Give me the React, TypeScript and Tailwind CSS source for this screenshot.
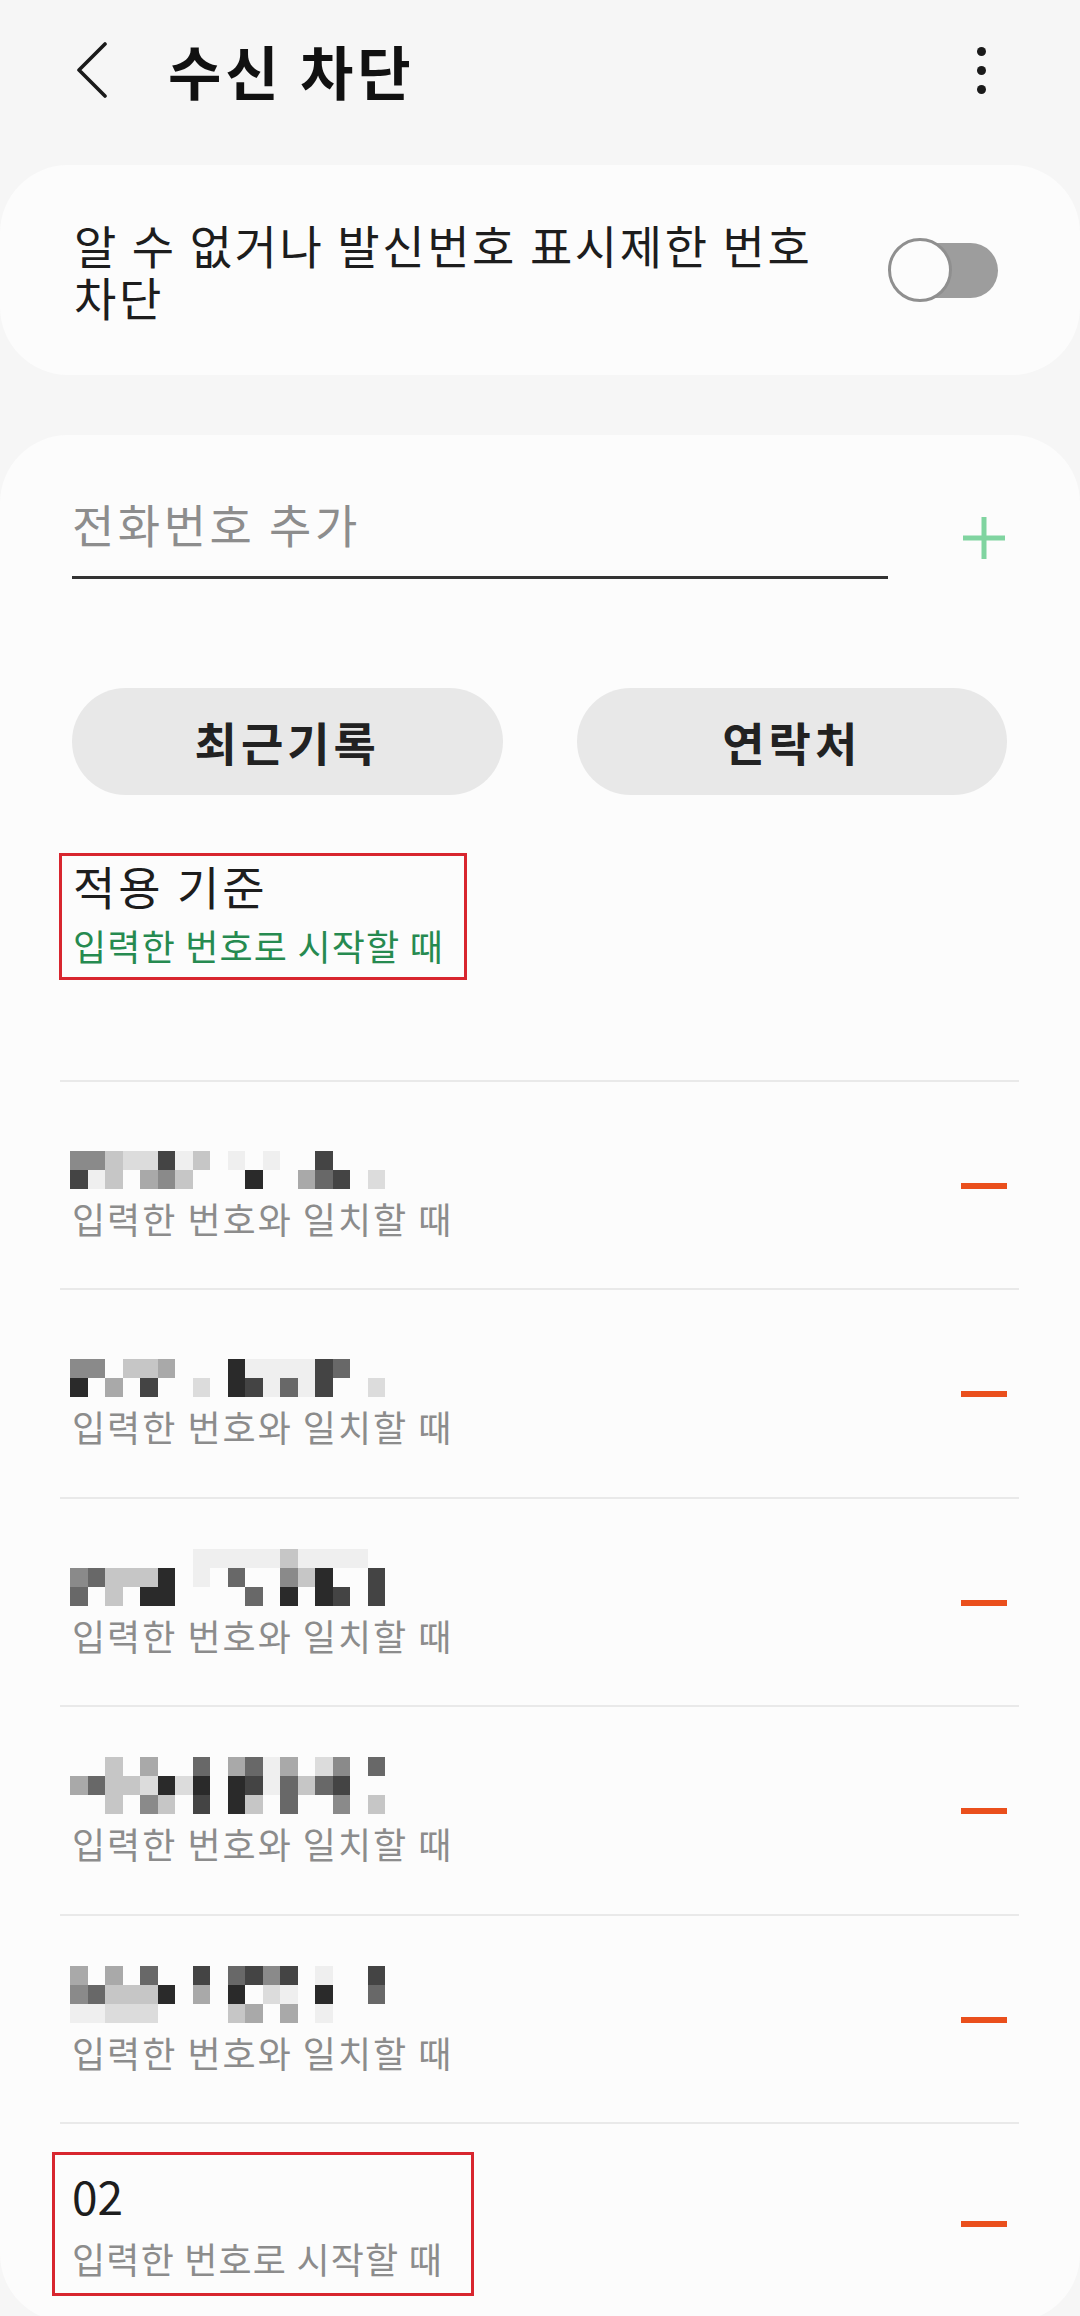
const shade = [
  '',
  'bg-[#efefef]',
  'bg-[#dcdcdc]',
  'bg-[#c6c6c6]',
  'bg-[#a9a9a9]',
  'bg-[#8a8a8a]',
  'bg-[#686868]',
  'bg-[#444444]',
  'bg-[#2a2a2a]',
];

// blurred phone numbers, as mosaic cells (0 = empty)
const blocked: number[][][] = [
  [
    [0, 0, 0, 0, 0, 0, 0, 0, 0, 0, 0, 0, 0, 0, 0, 0, 0, 0],
    [5, 5, 3, 2, 2, 7, 1, 3, 0, 1, 0, 1, 0, 0, 7, 0, 0, 0],
    [7, 1, 3, 0, 4, 5, 3, 0, 0, 0, 8, 0, 0, 4, 6, 7, 0, 2],
  ],
  [
    [0, 0, 0, 0, 0, 0, 0, 0, 0, 0, 0, 0, 0, 0, 0, 0, 0, 0],
    [5, 5, 0, 3, 3, 4, 0, 0, 0, 8, 1, 1, 1, 1, 7, 6, 0, 0],
    [8, 0, 4, 0, 7, 0, 0, 2, 0, 8, 7, 1, 6, 1, 7, 0, 0, 2],
  ],
  [
    [0, 0, 0, 0, 0, 0, 0, 1, 1, 1, 1, 1, 3, 1, 1, 1, 1, 0],
    [5, 6, 3, 3, 3, 8, 0, 1, 0, 6, 0, 0, 5, 3, 8, 0, 0, 7],
    [6, 0, 3, 0, 8, 8, 0, 0, 0, 0, 6, 0, 8, 0, 8, 7, 0, 7],
  ],
  [
    [0, 0, 3, 0, 4, 0, 0, 6, 0, 4, 6, 1, 4, 0, 2, 5, 0, 6],
    [4, 6, 3, 3, 2, 8, 2, 8, 0, 8, 7, 1, 6, 3, 6, 7, 0, 0],
    [0, 0, 3, 0, 5, 3, 0, 7, 0, 8, 3, 0, 6, 0, 0, 5, 0, 3],
  ],
  [
    [4, 0, 4, 0, 6, 0, 0, 7, 0, 6, 7, 5, 7, 0, 1, 0, 0, 7],
    [5, 6, 3, 3, 3, 8, 0, 4, 0, 8, 0, 2, 1, 0, 8, 0, 0, 6],
    [1, 1, 2, 2, 2, 0, 0, 0, 0, 3, 4, 0, 4, 0, 1, 0, 0, 0],
  ],
];

function Mosaic({ rows }: { rows: number[][] }) {
  return (
    <div className="ml-[10px] flex flex-col blur-[0.7px]">
      {rows.map((r, i) => (
        <div key={i} className="flex">
          {r.map((v, j) => (
            <div key={j} className={`h-[19px] w-[17.5px] ${shade[v]}`} />
          ))}
        </div>
      ))}
    </div>
  );
}

function Minus() {
  return <div className="mr-[12px] ml-auto h-[6px] w-[46px] bg-[#ea4f1c]" />;
}

export default function App() {
  return (
    <div className="min-h-[2316px] bg-[#f6f6f6] font-['Noto_Sans_CJK_KR','Noto_Sans',sans-serif] text-[#1d1d1d]">
      {/* header */}
      <div className="flex h-[165px] items-center pb-[25px]">
        <div className="ml-[76px] w-[34px]">
          <svg width="32" height="56" viewBox="0 0 32 56" fill="none">
            <path d="M29 2 L3 28 L29 54" stroke="#1a1a1a" strokeWidth="3.6" strokeLinecap="round" strokeLinejoin="round" />
          </svg>
        </div>
        <h1 className="ml-[58px] text-[58px] leading-none font-bold tracking-[4px] text-[#111]">수신 차단</h1>
        <div className="mr-[94px] ml-auto flex flex-col gap-[10px]">
          <span className="h-[9px] w-[9px] rounded-full bg-[#1a1a1a]" />
          <span className="h-[9px] w-[9px] rounded-full bg-[#1a1a1a]" />
          <span className="h-[9px] w-[9px] rounded-full bg-[#1a1a1a]" />
        </div>
      </div>

      {/* unknown numbers toggle */}
      <div className="flex h-[210px] items-center rounded-[68px] bg-[#fcfcfc] pr-[82px] pl-[74px]">
        <p className="flex-1 pr-[30px] text-[46px] leading-[52px] tracking-[2.6px]">알 수 없거나 발신번호 표시제한 번호 차단</p>
        <div className="relative h-[65px] w-[110px]">
          <div className="absolute top-[5px] right-0 h-[55px] w-[90px] rounded-full bg-[#9d9d9d]" />
          <div className="absolute top-0 left-0 h-[64px] w-[64px] rounded-full border-[3px] border-[#8f8f8f] bg-[#fcfcfc]" />
        </div>
      </div>

      {/* block list */}
      <div className="mt-[60px] rounded-[68px] bg-[#fcfcfc] pt-[58px]">
        <div className="flex items-start">
          <div className="ml-[72px] w-[816px] border-b-[3px] border-[#333] pb-[23px] text-[46px] leading-[60px] tracking-[3.5px] text-[#8d8d8d]">
            전화번호 추가
          </div>
          <svg className="mt-[22px] mr-[73px] ml-auto" width="46" height="46" viewBox="0 0 46 46">
            <path d="M23 2 V44 M2 23 H44" stroke="#80d4a0" strokeWidth="5" />
          </svg>
        </div>

        <div className="mt-[109px] flex gap-[74px] pr-[73px] pl-[72px]">
          <button className="flex h-[107px] w-[431px] items-center justify-center rounded-full bg-[#e8e8e8] text-[46px] font-bold tracking-[4px] text-[#222]">
            최근기록
          </button>
          <button className="flex h-[107px] w-[431px] items-center justify-center rounded-full bg-[#e8e8e8] text-[46px] font-bold tracking-[4px] text-[#222]">
            연락처
          </button>
        </div>

        <div className="mt-[58px] ml-[59px] h-[127px] w-[408px] border-[3px] border-[#d8262f] pt-[2px] pl-[11px]">
          <p className="text-[46px] leading-[54px] tracking-[3px]">적용 기준</p>
          <p className="mt-[11px] text-[36px] leading-[44px] tracking-[1.2px] text-[#268a50]">입력한 번호로 시작할 때</p>
        </div>

        <div className="mt-[100px] mr-[61px] ml-[60px]">
          {blocked.map((rows, i) => (
            <div key={i} className="flex items-center border-t-2 border-[#e9e9e9] pt-[50px] pb-[48.4px]">
              <div>
                <Mosaic rows={rows} />
                <p className="mt-[7px] pl-[12px] text-[36px] leading-[44px] tracking-[2px] text-[#8c8c8c]">입력한 번호와 일치할 때</p>
              </div>
              <Minus />
            </div>
          ))}
          <div className="flex items-center border-t-2 border-[#e9e9e9] pt-[28px] pb-[26px]">
            <div className="-ml-[8px] w-[422px] border-[3px] border-[#d8262f] pt-[17px] pb-[13px] pl-[17px]">
              <p className="text-[46px] leading-[47px]">02</p>
              <p className="mt-[17px] text-[36px] leading-[44px] tracking-[1.2px] text-[#8c8c8c]">입력한 번호로 시작할 때</p>
            </div>
            <Minus />
          </div>
        </div>
      </div>
    </div>
  );
}
